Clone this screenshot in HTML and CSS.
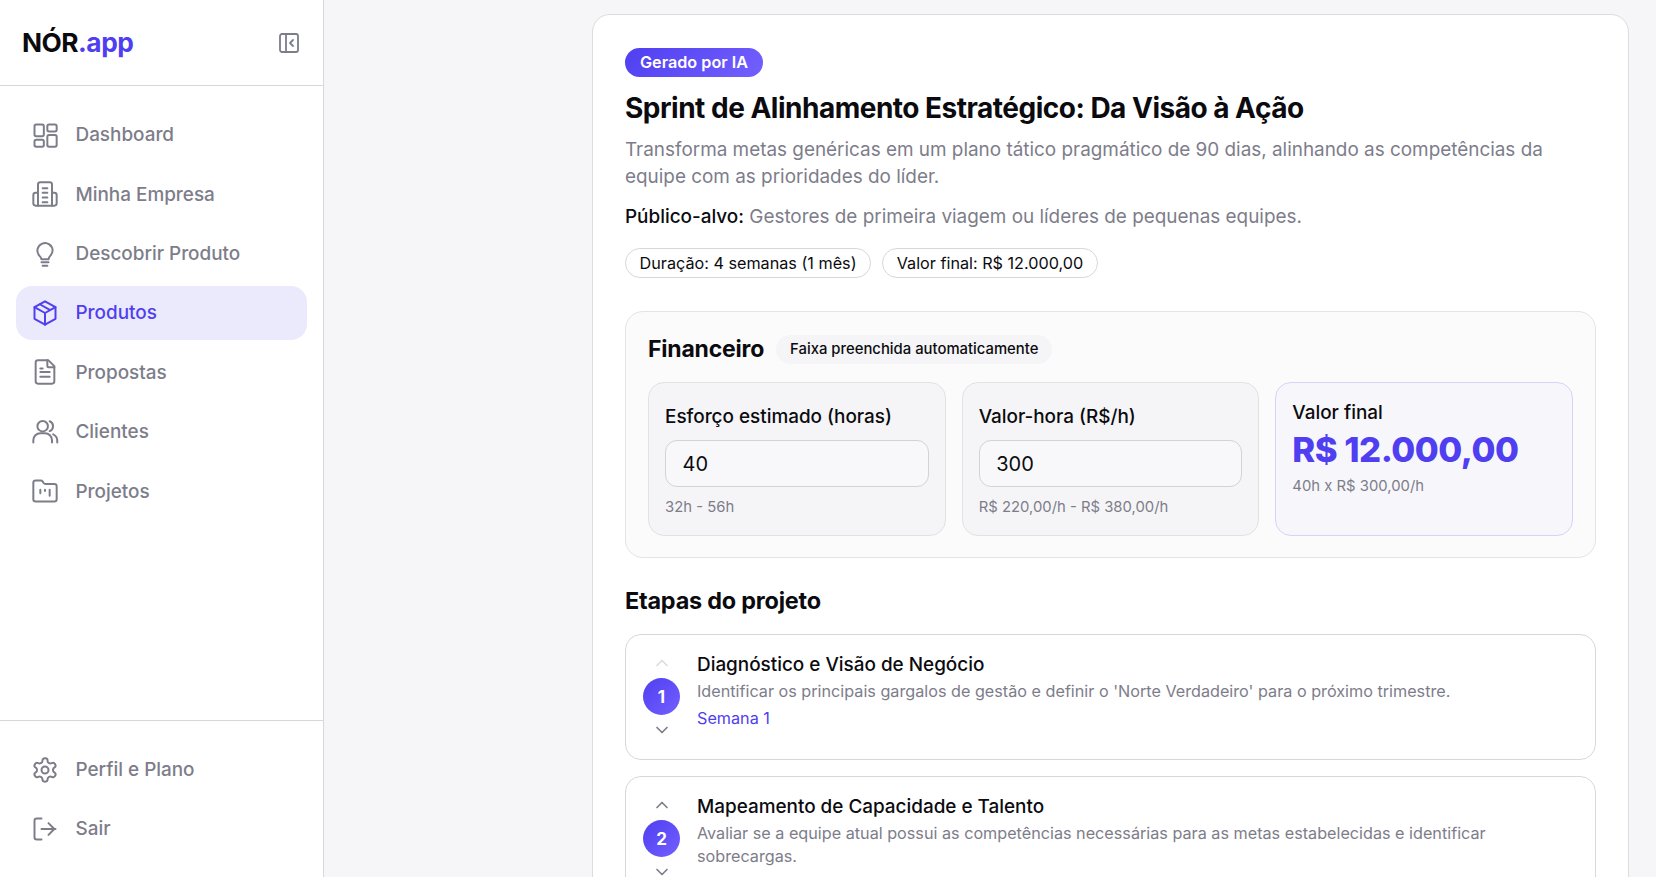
FILE: index.html
```html
<!DOCTYPE html>
<html lang="pt-BR">
<head>
<meta charset="utf-8">
<title>NÓR.app</title>
<link rel="stylesheet" href="styles.css">
</head>
<body>
<div class="app">
  <aside class="sidebar">
    <div class="brand">
      <span class="logo">NÓR<span class="logo-accent">.app</span></span>
      <svg class="collapse" viewBox="0 0 24 24"><rect x="3" y="3" width="18" height="18" rx="2"/><path d="M9 3v18M16 9l-3 3 3 3"/></svg>
    </div>
    <nav class="nav">
      <a class="nav-item"><svg class="icon" viewBox="0 0 24 24"><rect x="3" y="3" width="8" height="10" rx="1.5"/><rect x="14" y="3" width="8" height="6" rx="1.5"/><rect x="14" y="12" width="8" height="10" rx="1.5"/><rect x="3" y="16" width="8" height="6" rx="1.5"/></svg>Dashboard</a>
      <a class="nav-item"><svg class="icon" viewBox="0 0 24 24"><path d="M6 22V4a2 2 0 0 1 2-2h8a2 2 0 0 1 2 2v18"/><path d="M6 11H4a2 2 0 0 0-2 2v7a2 2 0 0 0 2 2h16a2 2 0 0 0 2-2v-7a2 2 0 0 0-2-2h-2"/><path d="M10 7h4M10 11h4M10 15h4M10 19h4"/></svg>Minha Empresa</a>
      <a class="nav-item"><svg class="icon" viewBox="0 0 24 24"><path d="M9 16.5c-.3-1.3-1-2.2-1.9-3.1A6.5 6.5 0 1 1 18.500 9c0 1.800-.8 3.200-1.900 4.400-.8.800-1.400 1.800-1.600 3.100z"/><path d="M9 19h6M10 22h4"/></svg>Descobrir Produto</a>
      <a class="nav-item active"><svg class="icon" viewBox="0 0 24 24"><path d="M12 2 3 7v10l9 5 9-5V7z"/><path d="m3 7 9 5 9-5M12 12v10M7.500 4.500l9 5"/></svg>Produtos</a>
      <a class="nav-item"><svg class="icon" viewBox="0 0 24 24"><path d="M15 2H6a2 2 0 0 0-2 2v16a2 2 0 0 0 2 2h12a2 2 0 0 0 2-2V7z"/><path d="M14 2v5a1 1 0 0 0 1 1h5M8 12h8M8 16h8M8 9h2"/></svg>Propostas</a>
      <a class="nav-item"><svg class="icon" viewBox="0 0 24 24"><path d="M2 21v-2a6 6 0 0 1 6-6h4a6 6 0 0 1 6 6v2"/><circle cx="10" cy="7" r="4.500"/><path d="M16 2.800a4.500 4.500 0 0 1 0 8.400M19 14a6 6 0 0 1 3.500 5v2"/></svg>Clientes</a>
      <a class="nav-item"><svg class="icon" viewBox="0 0 24 24"><path d="M4 21h16a2 2 0 0 0 2-2V8a2 2 0 0 0-2-2h-7.500a2 2 0 0 1-1.700-.9l-.8-1.200A2 2 0 0 0 8.300 3H4a2 2 0 0 0-2 2v14a2 2 0 0 0 2 2z"/><path d="M8 11v3M12 11v1M16 11v5"/></svg>Projetos</a>
    </nav>
    <nav class="nav nav-bottom">
      <a class="nav-item"><svg class="icon" viewBox="0 0 24 24"><path d="M12.220 2h-.44a2 2 0 0 0-2 2v.18a2 2 0 0 1-1 1.730l-.43.25a2 2 0 0 1-2 0l-.15-.08a2 2 0 0 0-2.730.73l-.22.38a2 2 0 0 0 .73 2.730l.15.1a2 2 0 0 1 1 1.720v.51a2 2 0 0 1-1 1.740l-.15.09a2 2 0 0 0-.73 2.730l.22.38a2 2 0 0 0 2.730.73l.15-.08a2 2 0 0 1 2 0l.43.25a2 2 0 0 1 1 1.730V20a2 2 0 0 0 2 2h.44a2 2 0 0 0 2-2v-.18a2 2 0 0 1 1-1.730l.43-.25a2 2 0 0 1 2 0l.15.08a2 2 0 0 0 2.730-.73l.22-.39a2 2 0 0 0-.73-2.730l-.15-.08a2 2 0 0 1-1-1.740v-.5a2 2 0 0 1 1-1.740l.15-.09a2 2 0 0 0 .73-2.730l-.22-.38a2 2 0 0 0-2.730-.73l-.15.08a2 2 0 0 1-2 0l-.43-.25a2 2 0 0 1-1-1.730V4a2 2 0 0 0-2-2z"/><circle cx="12" cy="12" r="3"/></svg>Perfil e Plano</a>
      <a class="nav-item"><svg class="icon" viewBox="0 0 24 24"><path d="M9 21H5a2 2 0 0 1-2-2V5a2 2 0 0 1 2-2h4M15 17l5-5-5-5M21 12H9"/></svg>Sair</a>
    </nav>
  </aside>
  <main class="main">
    <article class="card">
      <span class="ai-badge">Gerado por IA</span>
      <h1 class="title">Sprint de Alinhamento Estratégico: Da Visão à Ação</h1>
      <p class="desc">Transforma metas genéricas em um plano tático pragmático de 90 dias, alinhando as competências da equipe com as prioridades do líder.</p>
      <p class="audience"><strong>Público-alvo:</strong> Gestores de primeira viagem ou líderes de pequenas equipes.</p>
      <div class="chips">
        <span class="chip">Duração: 4 semanas (1 mês)</span>
        <span class="chip">Valor final: R$ 12.000,00</span>
      </div>
      <section class="finance">
        <div class="finance-head">
          <h2 class="finance-title">Financeiro</h2>
          <span class="auto-tag">Faixa preenchida automaticamente</span>
        </div>
        <div class="finance-grid">
          <div class="fin-card">
            <label class="fin-label">Esforço estimado (horas)</label>
            <div class="fin-input">40</div>
            <p class="fin-hint">32h - 56h</p>
          </div>
          <div class="fin-card">
            <label class="fin-label">Valor-hora (R$/h)</label>
            <div class="fin-input">300</div>
            <p class="fin-hint">R$ 220,00/h - R$ 380,00/h</p>
          </div>
          <div class="fin-card fin-total">
            <span class="fin-label">Valor final</span>
            <strong class="total-value">R$ 12.000,00</strong>
            <p class="fin-hint">40h x R$ 300,00/h</p>
          </div>
        </div>
      </section>
      <h2 class="steps-title">Etapas do projeto</h2>
      <div class="steps">
        <div class="step">
          <div class="step-rail">
            <svg class="chev disabled" viewBox="0 0 24 24"><path d="m6 15 6-6 6 6"/></svg>
            <span class="step-num">1</span>
            <svg class="chev" viewBox="0 0 24 24"><path d="m6 9 6 6 6-6"/></svg>
          </div>
          <div class="step-body">
            <h3 class="step-title">Diagnóstico e Visão de Negócio</h3>
            <p class="step-desc">Identificar os principais gargalos de gestão e definir o 'Norte Verdadeiro' para o próximo trimestre.</p>
            <span class="step-week">Semana 1</span>
          </div>
        </div>
        <div class="step">
          <div class="step-rail">
            <svg class="chev" viewBox="0 0 24 24"><path d="m6 15 6-6 6 6"/></svg>
            <span class="step-num">2</span>
            <svg class="chev" viewBox="0 0 24 24"><path d="m6 9 6 6 6-6"/></svg>
          </div>
          <div class="step-body">
            <h3 class="step-title">Mapeamento de Capacidade e Talento</h3>
            <p class="step-desc">Avaliar se a equipe atual possui as competências necessárias para as metas estabelecidas e identificar sobrecargas.</p>
            <span class="step-week">Semana 2</span>
          </div>
        </div>
      </div>
    </article>
  </main>
</div>
</body>
</html>
```
FILE: styles.css
```css
* { box-sizing: border-box; }
html, body { margin: 0; height: 100%; overflow: hidden; }
body { font-family: Inter, "Liberation Sans", sans-serif; color: #0b0b0f; background: #f6f6f8; }
h1, h2, h3, p { margin: 0; }

.app { display: flex; height: 877px; overflow: hidden; }

.sidebar { width: 324px; flex: none; display: flex; flex-direction: column; background: #fff; border-right: 1px solid #d8d8dc; }
.brand { height: 86px; flex: none; display: flex; align-items: center; justify-content: space-between; padding: 0 22px; border-bottom: 1px solid #d8d8dc; }
.logo { font-size: 26.300px; font-weight: 700; letter-spacing: -0.5px; color: #0b0b0f; }
.logo-accent { color: #4f3ff0; }
.collapse { width: 24px; height: 24px; fill: none; stroke: #7d7d8a; stroke-width: 1.800; stroke-linecap: round; stroke-linejoin: round; }

.nav { display: flex; flex-direction: column; gap: 5.400px; padding: 21.800px 16px; flex: 1; }
.nav-bottom { flex: none; border-top: 1px solid #d8d8dc; padding: 21.500px 16px 0; height: 157px; }
.nav-item { display: flex; flex: none; align-items: center; gap: 16.500px; height: 54px; padding: 0 15px; border-radius: 16px; font-size: 18.900px; font-weight: 450; color: #7d7d8a; }
.nav-item.active { background: #ebe9fc; color: #4f3ff0; }
.icon { width: 28px; height: 28px; flex: none; fill: none; stroke: currentColor; stroke-width: 1.700; stroke-linecap: round; stroke-linejoin: round; }

.main { flex: 1; min-width: 0; padding: 14px 27px 0 268px; }
.card { width: 1037px; background: #fff; border: 1px solid #dcdce0; border-radius: 18px; padding: 33px 32px 32px; }

.ai-badge { display: inline-flex; align-items: center; height: 29px; padding: 0 15px 2px; border-radius: 15px; background: linear-gradient(135deg, #4f3ff0, #7360ff); color: #fff; font-size: 16.200px; font-weight: 600; }
.title { margin-top: 13px; font-size: 28px; line-height: 36px; font-weight: 700; letter-spacing: -0.5px; color: #0b0b0f; }
.desc { margin-top: 10px; font-size: 18.900px; line-height: 27.400px; color: #7d7d8a; }
.audience { margin-top: 12px; font-size: 18.900px; line-height: 27.400px; color: #7d7d8a; }
.audience strong { font-weight: 450; color: #0b0b0f; }
.chips { display: flex; gap: 11px; margin-top: 18px; }
.chip { display: inline-flex; align-items: center; height: 29.500px; padding: 0 13.600px; border: 1px solid #d8d8dc; border-radius: 15px; font-size: 16.200px; color: #0b0b0f; }

.finance { margin-top: 33px; height: 247px; padding: 23px 22px 22px; background: #fbfbfc; border: 1px solid #e4e4e8; border-radius: 18px; }
.finance-head { display: flex; align-items: center; gap: 12px; height: 29px; }
.finance-title { font-size: 23px; font-weight: 700; letter-spacing: -0.2px; }
.auto-tag { display: inline-flex; align-items: center; height: 29px; padding: 0 14px; border-radius: 15px; background: #f5f5f7; font-size: 14.850px; font-weight: 500; }
.finance-grid { display: grid; grid-template-columns: repeat(3, 1fr); gap: 16px; margin-top: 18px; }
.fin-card { height: 154px; padding: 20px 16px 0; background: #f5f5f7; border: 1px solid #e2e2e6; border-radius: 16px; }
.fin-label { display: block; font-size: 18.900px; line-height: 27px; font-weight: 450; }
.fin-input { display: flex; align-items: center; height: 47.500px; margin-top: 10px; padding: 1px 16.500px 0; background: #f8f8fa; border: 1px solid #d2d2d8; border-radius: 12px; font-size: 20px; }
.fin-hint { margin-top: 9px; font-size: 14.850px; line-height: 22px; color: #7d7d8a; }
.fin-total { padding-top: 16px; background: #f7f7fb; border-color: #d6d3f8; }
.total-value { display: block; margin-top: 1px; font-size: 34.700px; line-height: 45px; font-weight: 800; letter-spacing: -0.5px; color: #4f3ff0; }
.fin-total .fin-hint { margin-top: 3px; }

.steps-title { margin-top: 27px; font-size: 23.400px; line-height: 32px; font-weight: 700; letter-spacing: -0.2px; }
.steps { display: flex; flex-direction: column; gap: 16px; margin-top: 17px; }
.step { display: flex; gap: 17px; padding: 16.500px 17px 18.500px; background: #fff; border: 1px solid #d8d8dc; border-radius: 16px; }
.step-rail { display: flex; flex-direction: column; align-items: center; gap: 5px; width: 37px; flex: none; margin-top: 2px; }
.chev { width: 20px; height: 20px; fill: none; stroke: #7d7d8a; stroke-width: 2; stroke-linecap: round; stroke-linejoin: round; }
.chev.disabled { stroke: #dcdce0; }
.step-num { display: flex; align-items: center; justify-content: center; width: 37px; height: 37px; border-radius: 50%; background: linear-gradient(135deg, #4f3ff0, #7360ff); color: #fff; font-size: 17px; font-weight: 700; }
.step-body { min-width: 0; }
.step-title { font-size: 18.900px; line-height: 27px; font-weight: 450; }
.step-desc { margin-top: 1.500px; font-size: 16.200px; line-height: 23px; color: #7d7d8a; }
.step-week { display: block; margin-top: 3px; font-size: 16.200px; line-height: 24px; color: #4f3ff0; }
```
